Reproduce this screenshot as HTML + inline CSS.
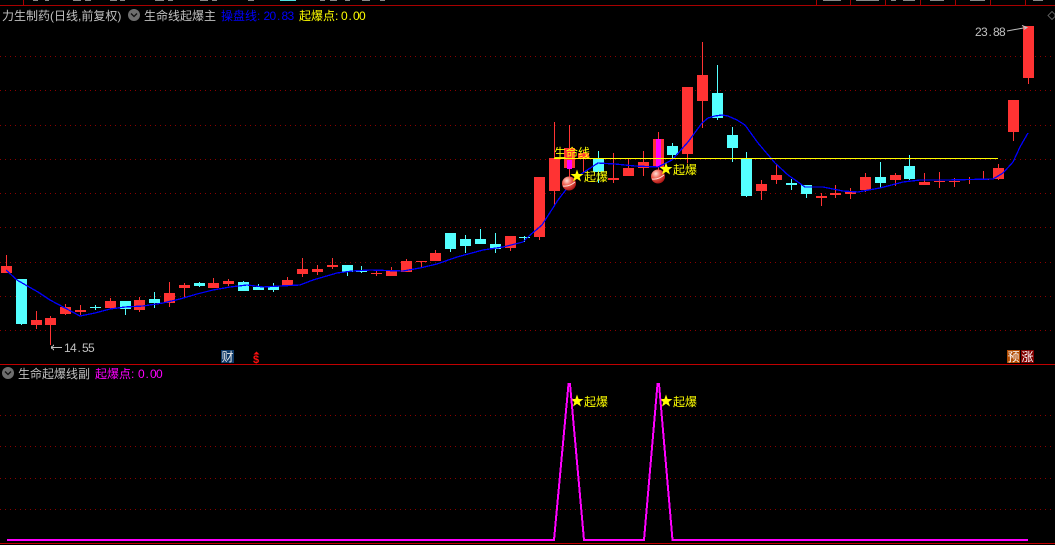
<!DOCTYPE html>
<html lang="zh">
<head>
<meta charset="utf-8">
<title>力生制药</title>
<style>
html,body{margin:0;padding:0;background:#000;width:1055px;height:545px;overflow:hidden}
svg{display:block;position:absolute;left:0;top:0}
text{font-family:"WenQuanYi Zen Hei","Liberation Sans","Noto Sans CJK SC",sans-serif;font-size:12px}
.n{font-family:"Liberation Sans",sans-serif;font-size:12px}
.g{fill:#c0c0c0}
.y{fill:#ffff00}
</style>
</head>
<body>
<svg width="1055" height="545" viewBox="0 0 1055 545" xmlns="http://www.w3.org/2000/svg">
<defs>
<radialGradient id="b" cx="35%" cy="30%" r="75%">
<stop offset="0" stop-color="#ffe0d8"/><stop offset=".45" stop-color="#f06050"/><stop offset="1" stop-color="#a81010"/>
</radialGradient>
</defs>

<!-- top strip -->
<g fill="#8a8a8a" shape-rendering="crispEdges">
<rect x="33" y="0" width="5" height="1"/><rect x="45" y="0" width="4" height="1"/><rect x="73" y="0" width="8" height="1"/><rect x="85" y="0" width="6" height="1"/><rect x="110" y="0" width="7" height="1"/><rect x="120" y="0" width="5" height="1"/><rect x="155" y="0" width="9" height="1"/><rect x="168" y="0" width="5" height="1"/><rect x="200" y="0" width="8" height="1"/><rect x="212" y="0" width="5" height="1"/><rect x="248" y="0" width="6" height="1"/><rect x="320" y="0" width="5" height="1"/><rect x="330" y="0" width="7" height="1"/><rect x="345" y="0" width="5" height="1"/><rect x="362" y="0" width="8" height="1"/><rect x="380" y="0" width="5" height="1"/>
<rect x="823" y="0" width="18" height="1"/><rect x="856" y="0" width="23" height="1"/><rect x="891" y="0" width="5" height="1"/><rect x="903" y="0" width="12" height="1"/><rect x="930" y="0" width="14" height="1"/><rect x="970" y="0" width="15" height="1"/><rect x="1033" y="0" width="10" height="1"/>
</g>
<rect x="280" y="0" width="16" height="1" fill="#54e0e0" shape-rendering="crispEdges"/>
<path d="M0 5.500H1055M23.500 0V5M816.500 0V5M850.500 0V5M885.500 0V5M920.500 0V5M955.500 0V5M990.500 0V5M1025.500 0V5" stroke="#a80000" stroke-width="1" fill="none" shape-rendering="crispEdges"/>
<path d="M1048 15.500l4-4 3 3v2l-3 3z" fill="none" stroke="#555" shape-rendering="crispEdges"/>

<!-- grid -->
<g stroke="#8c0000" stroke-width="1" stroke-dasharray="1 4" shape-rendering="crispEdges">
<path d="M0 56.500H1055M0 90.500H1055M0 125.500H1055M0 159.500H1055M0 193.500H1055M0 227.500H1055M0 262.500H1055M0 296.500H1055M0 330.500H1055"/>
<path d="M0 415.500H1055M0 446.500H1055M0 478.500H1055M0 509.500H1055"/>
</g>
<path d="M0 364.500H1055M0 543.500H1055" stroke="#c00000" stroke-width="1" shape-rendering="crispEdges"/>

<!-- red candles -->
<path fill="#ff3333" shape-rendering="crispEdges" d="
M6 255h1V273h-1zM1 266h11V273h-11z
M36 311h1V329h-1zM31 320h11V325h-11z
M50 316h1V345h-1zM45 318h11V325h-11z
M65 304h1V315h-1zM60 307h11V314h-11z
M80 305h1V315h-1zM75 310h11V312h-11z
M110 298h1V309h-1zM105 301h11V308h-11z
M139 297h1V312h-1zM134 300h11V310h-11z
M169 282h1V307h-1zM164 293h11V303h-11z
M184 283h1V298h-1zM179 285h11V288h-11z
M213 278h1V288h-1zM208 283h11V288h-11z
M228 279h1V286h-1zM223 281h11V284h-11z
M287 277h1V286h-1zM282 280h11V285h-11z
M302 258h1V277h-1zM297 269h11V274h-11z
M317 265h1V275h-1zM312 269h11V272h-11z
M332 258h1V269h-1zM327 265h11V267h-11z
M376 271h1V276h-1zM371 273h11V274h-11z
M391 267h1V276h-1zM386 270h11V276h-11z
M406 259h1V272h-1zM401 261h11V272h-11z
M421 261h1V267h-1zM416 261h11V262h-11z
M435 250h1V261h-1zM430 253h11V261h-11z
M510 236h1V251h-1zM505 236h11V248h-11z
M539 177h1V240h-1zM534 177h11V237h-11z
M554 122h1V205h-1zM549 158h11V191h-11z
M569 125h1V178h-1zM564 148h11V168h-11z
M583 150h1V173h-1zM578 153h11V159h-11z
M613 153h1V183h-1zM608 178h11V180h-11z
M628 159h1V176h-1zM623 168h11V176h-11z
M643 151h1V176h-1zM638 162h11V168h-11z
M658 132h1V170h-1zM653 139h11V167h-11z
M687 87h1V163h-1zM682 87h11V154h-11z
M702 42h1V128h-1zM697 75h11V101h-11z
M761 180h1V200h-1zM756 184h11V191h-11z
M776 165h1V184h-1zM771 175h11V180h-11z
M821 193h1V206h-1zM816 196h11V198h-11z
M835 185h1V198h-1zM830 193h11V195h-11z
M850 188h1V199h-1zM845 191h11V194h-11z
M865 173h1V192h-1zM860 177h11V190h-11z
M895 173h1V186h-1zM890 175h11V180h-11z
M924 173h1V185h-1zM919 182h11V185h-11z
M939 172h1V188h-1zM934 181h11V182h-11z
M954 178h1V187h-1zM949 181h11V182h-11z
M969 177h1V184h-1zM964 179h11V180h-11z
M983 171h1V180h-1zM978 179h11V180h-11z
M998 164h1V180h-1zM993 168h11V179h-11z
M1013 100h1V141h-1zM1008 100h11V132h-11z
M1028 26h1V84h-1zM1023 26h11V78h-11z"/>

<!-- cyan candles -->
<path fill="#54ffff" shape-rendering="crispEdges" d="
M21 279h1V325h-1zM16 279h11V324h-11z
M95 305h1V310h-1zM90 307h11V308h-11z
M125 301h1V315h-1zM120 301h11V309h-11z
M154 292h1V308h-1zM149 299h11V303h-11z
M199 282h1V287h-1zM194 283h11V286h-11z
M243 281h1V291h-1zM238 282h11V291h-11z
M258 284h1V290h-1zM253 287h11V290h-11z
M273 283h1V292h-1zM268 286h11V290h-11z
M347 265h1V276h-1zM342 265h11V272h-11z
M361 266h1V273h-1zM356 270h11V272h-11z
M450 233h1V252h-1zM445 233h11V249h-11z
M465 235h1V253h-1zM460 239h11V246h-11z
M480 229h1V244h-1zM475 239h11V244h-11z
M495 233h1V253h-1zM490 244h11V249h-11z
M524 236h1V242h-1zM519 237h11V238h-11z
M598 151h1V183h-1zM593 159h11V172h-11z
M672 143h1V160h-1zM667 146h11V155h-11z
M717 65h1V120h-1zM712 93h11V118h-11z
M732 127h1V162h-1zM727 135h11V148h-11z
M746 152h1V197h-1zM741 159h11V196h-11z
M791 179h1V190h-1zM786 183h11V185h-11z
M806 185h1V198h-1zM801 185h11V194h-11z
M880 162h1V188h-1zM875 177h11V183h-11z
M909 155h1V180h-1zM904 166h11V179h-11z"/>

<!-- magenta highlight in candles -->
<rect x="567" y="160" width="5" height="9" fill="#ff00ff" shape-rendering="crispEdges"/>
<rect x="656" y="139" width="5" height="28" fill="#ff00ff" shape-rendering="crispEdges"/>

<!-- blue line -->
<polyline fill="none" stroke="#0000ff" stroke-width="1.300" shape-rendering="crispEdges" points="6,270 17,280 38,292 50,300 65,308 80,316 95,313 110,309 125,307 143,306 163,303 180,299 197,294 213,290 230,287 247,285 263,287 280,286 300,285 313,280 337,273 353,271 370,270 403,271 420,268 437,264 457,257 483,250 503,247 523,242 529,236 542,225 558,200 575,178 598,163 615,164 635,166 658,167 672,160 688,142 702,123 708,118 715,116 722,115 728,116 737,120 745,125 758,143 775,163 788,175 805,187 823,187 843,191 858,192 880,188 903,182 920,180 947,180 993,179 1003,173 1013,162 1020,147 1028,133"/>

<!-- yellow line -->
<rect x="554" y="158" width="444" height="1" fill="#ffff00" shape-rendering="crispEdges"/>

<!-- balls -->
<circle cx="569" cy="183.500" r="7" fill="url(#b)"/>
<path d="M563 186q6 1 12-4" stroke="#ffe0d8" stroke-width="1" fill="none"/>
<circle cx="658" cy="176.500" r="7" fill="url(#b)"/>
<path d="M652 179q6 1 12-4" stroke="#ffe0d8" stroke-width="1" fill="none"/>

<!-- stars -->
<polygon class="y" points="577,169.500 578.600,174 583.500,174 579.600,177 581,181.500 577,178.800 573,181.500 574.400,177 570.500,174 575.400,174"/>
<polygon class="y" points="666,162.500 667.600,167 672.500,167 668.600,170 670,174.500 666,171.800 662,174.500 663.400,170 659.500,167 664.400,167"/>
<polygon class="y" points="577,394.500 578.600,399 583.500,399 579.600,402 581,406.500 577,403.800 573,406.500 574.400,402 570.500,399 575.400,399"/>
<polygon class="y" points="666,394.500 667.600,399 672.500,399 668.600,402 670,406.500 666,403.800 662,406.500 663.400,402 659.500,399 664.400,399"/>

<!-- chart labels -->
<text x="554" y="157" class="y">生命线</text>
<text x="584" y="181" class="y">起爆</text>
<text x="673" y="174" class="y">起爆</text>
<text x="584" y="406" class="y">起爆</text>
<text x="673" y="406" class="y">起爆</text>

<!-- price marks -->
<path d="M51 347.500H62M51 347.500l3-2.500M51 347.500l3 2.500" stroke="#c0c0c0" fill="none" shape-rendering="crispEdges"/>
<text x="64 70 77.500 82 88" y="352" class="n g">14.55</text>
<text x="975 981 988.500 993 999" y="36" class="n g">23.88</text>
<path d="M1007 31L1026 27.500M1022 25.500l5 2-3 2" stroke="#c0c0c0" fill="none"/>

<!-- header -->
<text x="2" y="20" class="g">力生制药(日线,前复权)</text>
<circle cx="134" cy="15" r="6" fill="#6e6e6e"/>
<path d="M131 13.500l3 3 3-3" stroke="#111" stroke-width="1.300" fill="none"/>
<text x="144" y="20" class="g">生命线起爆主</text>
<text x="221" y="20" fill="#0000ff">操盘线:</text>
<text x="263.500 269.500 277 281.500 287.500" y="20" class="n" fill="#0000ff">20.83</text>
<text x="299" y="20" class="y">起爆点:</text>
<text x="341 348.500 353 359" y="20" class="n y">0.00</text>

<!-- badges -->
<rect x="221" y="350" width="13" height="13" fill="#0f3a68" shape-rendering="crispEdges"/>
<text x="221.500" y="361" fill="#e8e8e8">财</text>
<text x="253" y="363" fill="#ff1010" style="font-family:'Liberation Sans',sans-serif;font-size:11px;font-weight:bold">$</text>
<path d="M256.500 351.500l-3 3h6z" fill="#ff1010"/>
<rect x="1007" y="350" width="13" height="13" fill="#b04a00" shape-rendering="crispEdges"/>
<text x="1007.500" y="361" fill="#fff">预</text>
<rect x="1021" y="350" width="13" height="13" fill="#800000" shape-rendering="crispEdges"/>
<text x="1021.500" y="361" fill="#fff">涨</text>

<!-- lower panel header -->
<circle cx="8" cy="373" r="6" fill="#6e6e6e"/>
<path d="M5 371.500l3 3 3-3" stroke="#111" stroke-width="1.300" fill="none"/>
<text x="18" y="378" class="g">生命起爆线副</text>
<text x="95" y="378" fill="#ff00ff">起爆点:</text>
<text x="138 145.500 150 156" y="378" class="n" fill="#ff00ff">0.00</text>

<!-- lower panel line -->
<polyline fill="none" stroke="#ff00ff" stroke-width="2" shape-rendering="crispEdges" points="7,540 554,540 568.500,384 570,384 584,540 644,540 657.500,384 659,384 672.500,540 1028,540"/>
</svg>
</body>
</html>
